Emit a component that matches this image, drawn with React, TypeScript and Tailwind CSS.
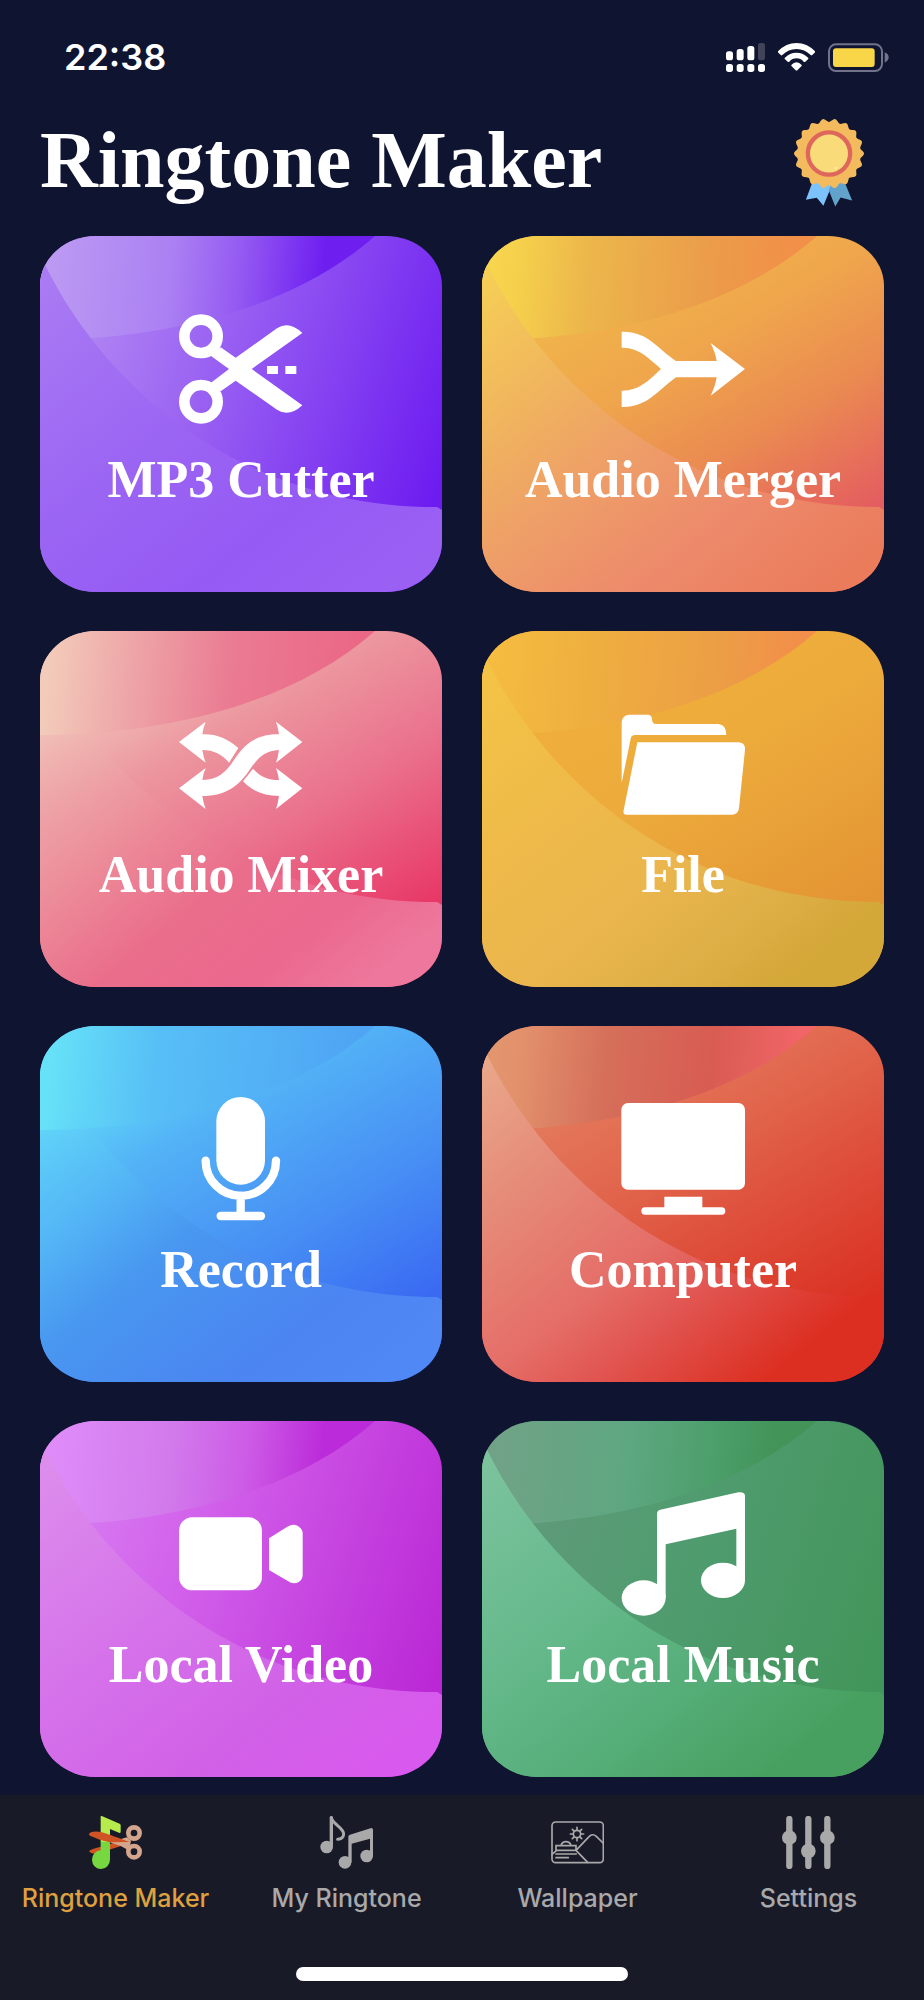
import type { ReactNode } from "react"

type Stop = [number, string]

interface Tile {
  id: string
  label: string
  top: Stop[]
  middle: Stop[]
  bottom: Stop[]
  sideways?: boolean
  icon: ReactNode
}

const tiles: Tile[] = [
  {
    id: "cutter",
    label: "MP3 Cutter",
    sideways: true,
    top: [[0, "#bc9af2"], [0.4, "#ab80f3"], [0.62, "#955bf2"], [0.9, "#6e1ff0"]],
    middle: [[0, "#b084f3"], [0.4, "#955bf2"], [1, "#6d1cf0"]],
    bottom: [[0, "#aa7cf3"], [0.45, "#9b65f3"], [0.75, "#955af4"], [1, "#9a60f4"]],
    icon: (
      <>
        <circle cx="66" cy="88" r="50" fill="none" stroke="currentColor" strokeWidth="32" />
        <circle cx="66" cy="284" r="50" fill="none" stroke="currentColor" strokeWidth="32" />
        <path d="M95 146L150 186L95 228L125 253L170 221L294 308Q330 332 370 295L218 186L370 78Q330 40 294 64L170 152L125 121Z" />
        <path d="M264 177h33v24h-33zM319 177h33v24h-33z" />
      </>
    ),
  },
  {
    id: "merger",
    label: "Audio Merger",
    top: [[0, "#f7d64d"], [0.1, "#f5cf4c"], [0.32, "#ecb64b"], [0.7, "#eb9d4a"], [1, "#f28f48"]],
    middle: [[0, "#f1b74a"], [0.35, "#efa54c"], [0.65, "#ea8a51"], [1, "#e45d60"]],
    bottom: [[0, "#f6d155"], [0.3, "#f0b35e"], [0.52, "#ee9d68"], [0.75, "#ed8a6b"], [1, "#ea7c5c"]],
    icon: (
      <path d="M2 74C80 72 110 125 165 162H287Q284 140 269 108L372 186L269 266Q284 234 287 211H165C110 250 80 302 2 300V251C50 252 80 225 120 186C80 150 50 120 2 122Z" />
    ),
  },
  {
    id: "mixer",
    label: "Audio Mixer",
    top: [[0, "#f3cbba"], [0.25, "#eea8a9"], [0.6, "#ea7b92"], [1, "#ea6886"]],
    middle: [[0, "#f1bfb7"], [0.25, "#ec979f"], [0.6, "#ea708c"], [1, "#e83867"]],
    bottom: [[0, "#f0b9b300"], [0.18, "#f0b9b300"], [0.42, "#ec8b99"], [0.62, "#ea6e8b"], [0.82, "#eb688e"], [1, "#ee789d"]],
    icon: (
      <>
        <path d="M0 120L80 59Q73 76 70 97C115 96 145 110 178 138L150 182C130 158 105 144 70 144Q73 165 80 182Z" />
        <path d="M0 259L80 198Q73 214 70 234C130 234 150 195 175 160C205 118 240 97 300 97Q297 76 291 59L370 120L291 182Q297 165 300 144C255 146 235 170 210 206C180 250 140 282 70 282Q73 304 80 321Z" />
        <path d="M370 259L291 198Q297 214 300 234C265 234 244 224 222 200L192 238C220 268 255 282 300 282Q297 304 291 321Z" />
      </>
    ),
  },
  {
    id: "file",
    label: "File",
    top: [[0, "#f5bc40"], [0.3, "#efb03f"], [0.75, "#ec9e45"], [1, "#f28f4a"]],
    middle: [[0, "#f0ae3a"], [0.4, "#edab3c"], [1, "#e39433"]],
    bottom: [[0, "#f4c445"], [0.35, "#efba49"], [0.6, "#eab64d"], [0.78, "#dfb047"], [0.95, "#d4a739"]],
    icon: (
      <>
        <path d="M2 243V62Q3 40 24 38H80Q93 38 93 52Q93 66 105 66H292Q316 68 316 99H42Q31 99 29 110Z" />
        <path d="M49 121H352Q374 123 372 143L354 318Q352 338 332 338H17Q5 338 8 325Z" />
      </>
    ),
  },
  {
    id: "record",
    label: "Record",
    top: [[0, "#66e2f8"], [0.35, "#57bff6"], [1, "#4fa5f4"]],
    middle: [[0, "#60d4f8"], [0.22, "#53b3f6"], [0.65, "#468df4"], [1, "#3a69f2"]],
    bottom: [[0, "#62d8f800"], [0.12, "#62d8f800"], [0.3, "#55b9f6"], [0.5, "#4897f0"], [0.8, "#4b85f1"], [1, "#5088f5"]],
    icon: (
      <>
        <rect x="112" width="146" height="263" rx="73" />
        <path
          d="M80 191A105 105 0 0 0 291 191M185 296V352M125 357H246"
          fill="none"
          stroke="currentColor"
          strokeWidth="25"
          strokeLinecap="round"
        />
      </>
    ),
  },
  {
    id: "computer",
    label: "Computer",
    top: [[0, "#e3966e"], [0.1, "#e2906c"], [0.38, "#d56f5a"], [0.72, "#d85c52"], [1, "#f16467"]],
    middle: [[0, "#e47d5e"], [0.35, "#e1654c"], [1, "#da3022"]],
    bottom: [[0, "#eaa98b"], [0.28, "#e58a78"], [0.55, "#e56e68"], [0.7, "#e15450"], [0.93, "#dc2f21"]],
    icon: (
      <>
        <rect x="1" y="18" width="371" height="260" rx="20" />
        <path d="M130 299h114v40h-114z" />
        <rect x="61" y="331" width="252" height="22" rx="11" />
      </>
    ),
  },
  {
    id: "video",
    label: "Local Video",
    sideways: true,
    top: [[0, "#df8cf9"], [0.4, "#d27aec"], [0.65, "#cd5be6"], [0.9, "#bb2bd9"]],
    middle: [[0, "#d777f0"], [0.35, "#d05ce9"], [1, "#ba28d5"]],
    bottom: [[0, "#dd8fec"], [0.45, "#d571ea"], [0.75, "#d161e7"], [1, "#d859ed"]],
    icon: (
      <>
        <rect y="76" width="249" height="219" rx="40" />
        <path d="M270 139L325 104Q345 92 360 104Q371 112 371 124V248Q371 262 360 269Q345 280 325 266L270 234Z" />
      </>
    ),
  },
  {
    id: "music",
    label: "Local Music",
    sideways: true,
    top: [[0, "#71a287"], [0.45, "#5ea781"], [0.75, "#4b9e69"], [0.92, "#429459"]],
    middle: [[0, "#5f9a78"], [0.4, "#509c70"], [1, "#42955a"]],
    bottom: [[0, "#7dc39e"], [0.4, "#65b98b"], [0.7, "#54ac76"], [0.93, "#48a060"]],
    icon: (
      <>
        <ellipse cx="68" cy="318" rx="66" ry="53" />
        <ellipse cx="306" cy="265" rx="66" ry="53" />
        <path d="M108 66Q108 55 118 53L352 1Q372 -1 372 12V265H346V110L134 157V318H108Z" />
      </>
    ),
  },
]

function Stops({ stops }: { stops: Stop[] }) {
  return (
    <>
      {stops.map(([offset, color]) => (
        <stop key={offset} offset={offset} stopColor={color} />
      ))}
    </>
  )
}

function TileArt({ tile }: { tile: Tile }) {
  const middle = tile.sideways
    ? { x1: 50, y1: 80, x2: 415, y2: 200 }
    : { x1: 150, y1: 15, x2: 325, y2: 310 }
  return (
    <svg
      className="absolute inset-0 size-full"
      viewBox="0 0 402 356"
      preserveAspectRatio="none"
      aria-hidden="true"
    >
      <defs>
        <linearGradient id={`${tile.id}-top`} gradientUnits="userSpaceOnUse" x1="10" y1="20" x2="312" y2="50">
          <Stops stops={tile.top} />
        </linearGradient>
        <linearGradient id={`${tile.id}-middle`} gradientUnits="userSpaceOnUse" {...middle}>
          <Stops stops={tile.middle} />
        </linearGradient>
        <linearGradient id={`${tile.id}-bottom`} gradientUnits="userSpaceOnUse" x1="0" y1="30" x2="290" y2="390">
          <Stops stops={tile.bottom} />
        </linearGradient>
      </defs>
      <path d="M0 0H402V356H0Z" fill={`url(#${tile.id}-middle)`} />
      <path d="M0 0H335C250 75 120 104 0 104Z" fill={`url(#${tile.id}-top)`} />
      <path d="M0 18C60 150 200 271 397 271L402 274V356H0Z" fill={`url(#${tile.id}-bottom)`} />
    </svg>
  )
}

function TileButton({ tile }: { tile: Tile }) {
  return (
    <button
      type="button"
      className="relative flex flex-col items-center overflow-hidden rounded-[56px/50px] pt-[71px] pb-[86px] text-white"
    >
      <TileArt tile={tile} />
      <svg className="relative size-[124px]" viewBox="0 0 372 372" fill="currentColor" aria-hidden="true">
        {tile.icon}
      </svg>
      <span className="relative mt-[23px] font-['Liberation_Serif',serif] text-[52px] leading-[52px] font-bold whitespace-nowrap">
        {tile.label}
      </span>
    </button>
  )
}

// scalloped edge with 18 bumps
const scallop = Array.from({ length: 180 }, (_, i) => {
  const a = (i * Math.PI) / 90
  const r = 101 + 5 * Math.cos(18 * a)
  return `${(106 + r * Math.sin(a + Math.PI / 18)).toFixed(1)},${(107 - r * Math.cos(a + Math.PI / 18)).toFixed(1)}`
}).join(" ")

function Badge() {
  return (
    <svg className="h-[89px] w-[70px]" viewBox="0 0 212 268" aria-hidden="true">
      <path d="M57 190L36 247L69 241L89 265L116 200Z" fill="#7cc2fb" />
      <path d="M113 200L105 217L125 267L141 240L176 249L152 190Z" fill="#62a3cc" />
      <polygon points={scallop} fill="#f3ba5e" />
      <circle cx="106" cy="107" r="64" fill="#f9dc79" stroke="#de665b" strokeWidth="13" />
      <circle cx="126" cy="151" r="3" fill="#fff4cf" />
    </svg>
  )
}

function StatusBar() {
  return (
    <div className="flex h-[118px] items-center justify-between pr-[35px] pb-1 pl-16">
      <time className="font-[Inter,sans-serif] text-[36px] leading-10 font-semibold">22:38</time>
      <div className="flex items-center gap-[13px]">
        <svg className="h-[29px] w-[39px]" viewBox="0 0 117 87" fill="#fff" aria-hidden="true">
          <rect y="25" width="21" height="27" rx="8" />
          <rect x="32" y="18" width="21" height="34" rx="8" />
          <rect x="64" y="9" width="21" height="43" rx="8" />
          <rect x="96" width="21" height="52" rx="7" fill="#414459" />
          <rect y="63" width="21" height="24" rx="8" />
          <rect x="32" y="63" width="21" height="24" rx="8" />
          <rect x="64" y="63" width="21" height="24" rx="8" />
          <rect x="96" y="63" width="21" height="24" rx="8" />
        </svg>
        <svg className="h-7 w-[37px]" viewBox="0 0 111 84" fill="#fff" aria-hidden="true">
          <path d="M0 25Q24 0 55.500 0T111 25Q112 27 110 29L102 37Q100 38 98 36Q80 18 55.500 18T13 36Q11 38 9 37L1 29Q-1 27 0 25Z" />
          <path d="M20 45Q35 29 55.500 29T91 45Q92 47 90 49L81 57Q79 58 77 56Q68 46 55.500 46T34 56Q32 58 30 57L21 49Q19 47 20 45Z" />
          <path d="M40 66Q47 58 55.500 58T71 66Q72 68 70 70L58 82Q55.500 84 53 82L41 70Q39 68 40 66Z" />
        </svg>
        <svg className="h-[29px] w-[61px]" viewBox="0 0 183 87" aria-hidden="true">
          <rect x="3" y="4" width="159" height="80" rx="21" fill="none" stroke="#70738a" strokeWidth="6" />
          <rect x="15" y="16" width="125" height="56" rx="9" fill="#f8d648" />
          <path d="M170 28Q182 33 182 43T170 59Z" fill="#70738a" />
        </svg>
      </div>
    </div>
  )
}

const tabs: { label: string; active?: boolean; icon: ReactNode }[] = [
  {
    label: "Ringtone Maker",
    active: true,
    icon: (
      <>
        <path d="M0 106Q2 101 14 98L92 76L105 87L40 108Q8 119 0 106Z" fill="#cf5324" />
        <path d="M35 1Q37 -1 40 1L92 23Q95 25 95 28V48Q94 52 90 50L63 39V78H35Z" fill="#b7ea4b" />
        <path d="M35 78H63V131A27 28 0 1 1 35 103Z" fill="#76d740" />
        <path d="M62 79L114 64L126 74L124 85L116 101L95 90Z" fill="#d3a58d" />
        <g fill="none" stroke="#d3a58d" strokeWidth="14">
          <circle cx="135" cy="51" r="17" />
          <circle cx="135" cy="107" r="17" />
        </g>
        <path d="M0 53Q8 44 36 48Q50 51 122 78L62 79Q30 72 3 59Q0 57 0 53Z" fill="#cf5324" />
      </>
    ),
  },
  {
    label: "My Ringtone",
    icon: (
      <>
        <g fill="currentColor">
          <circle cx="20" cy="93" r="19" />
          <circle cx="75" cy="139" r="19" />
          <circle cx="140" cy="120" r="19" />
          <path d="M29 4Q33 -3 39 3V93H29ZM85 62Q85 57 90 56L154 36Q159 36 159 41V120H150V68L95 83V139H85Z" />
        </g>
        <path
          d="M34 5C40 27 70 34 71 54Q70 69 53 70"
          fill="none"
          stroke="currentColor"
          strokeWidth="9"
          strokeLinecap="round"
        />
      </>
    ),
  },
  {
    label: "Wallpaper",
    icon: (
      <g fill="none" stroke="currentColor" strokeWidth="5" strokeLinecap="round">
        <rect x="3" y="18" width="154" height="122" rx="11" />
        <circle cx="78" cy="54" r="11" />
        <path d="M78 43V34M78 65V74M67 54H58M89 54H98M70 46L64 40M86 46L92 40M70 62L64 68M86 62L92 68" />
        <path d="M75 103L112 64Q124 50 136 61L156 81M75 103L110 139M3 115L17 103H75M15 103V89H75V103M30 88Q34 77 45 77T60 88M15 114H76M15 125H52" />
      </g>
    ),
  },
  {
    label: "Settings",
    icon: (
      <>
        <path
          d="M22 9V150M79 9V150M136 9V150"
          stroke="currentColor"
          strokeWidth="19"
          strokeLinecap="round"
        />
        <g fill="currentColor">
          <circle cx="22" cy="65" r="22" />
          <circle cx="79" cy="105" r="22" />
          <circle cx="136" cy="65" r="22" />
        </g>
      </>
    ),
  },
]

function TabBar() {
  return (
    <footer className="mt-auto bg-[#191a28] pt-[21px] pb-[19px]">
      <nav className="grid grid-cols-4">
        {tabs.map((tab) => (
          <a
            key={tab.label}
            href="#"
            aria-current={tab.active ? "page" : undefined}
            className={`flex flex-col items-center gap-4 font-[Inter,sans-serif] text-[25px] leading-[26px] font-medium whitespace-nowrap ${
              tab.active ? "text-[#dfa03f]" : "text-[#a9a9aa]"
            }`}
          >
            <svg className="size-[53px]" viewBox="0 0 159 159" aria-hidden="true">
              {tab.icon}
            </svg>
            {tab.label}
          </a>
        ))}
      </nav>
      <div className="mx-auto mt-14 h-3.5 w-[36%] rounded-full bg-white" />
    </footer>
  )
}

export default function App() {
  return (
    <div className="flex min-h-screen flex-col bg-[#0f1431] text-white">
      <StatusBar />
      <header className="flex items-start justify-between pr-[60px] pl-10">
        <h1 className="font-['Liberation_Serif',serif] text-[80px] leading-[84px] font-bold">Ringtone Maker</h1>
        <button type="button" aria-label="Premium">
          <Badge />
        </button>
      </header>
      <main className="grid grid-cols-2 gap-x-10 gap-y-[39px] px-10 pt-[29px] pb-[18px]">
        {tiles.map((tile) => (
          <TileButton key={tile.id} tile={tile} />
        ))}
      </main>
      <TabBar />
    </div>
  )
}
